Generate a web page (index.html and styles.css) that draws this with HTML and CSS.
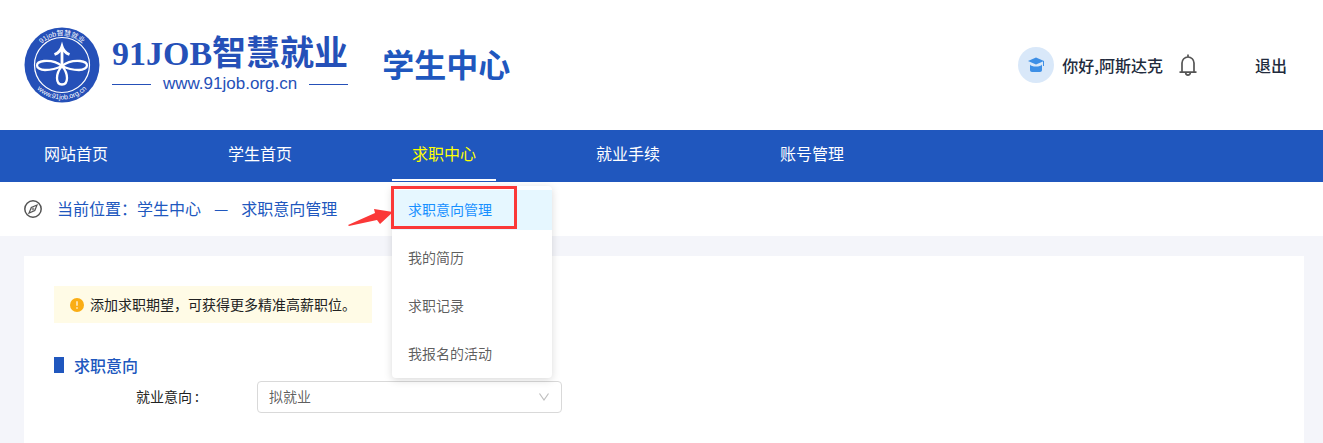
FILE: index.html
```html
<!DOCTYPE html>
<html lang="zh-CN">
<head>
  <meta charset="UTF-8" />
  <meta name="viewport" content="width=device-width, initial-scale=1" />
  <title>学生中心</title>
  <link rel="stylesheet" href="styles.css">
</head>
<body>
  <header class="header">
    <a class="logo" href="#">
      <svg class="logo-mark" viewBox="0 0 76 76" width="76" height="76">
        <defs>
          <path id="arcTop" d="M8.500 38a29.500 29.500 0 0 1 59 0" />
          <path id="arcBottom" d="M3.500 38a34.500 34.500 0 0 0 69 0" />
        </defs>
        <circle cx="38" cy="38" r="37.500" fill="#2550b8" />
        <circle cx="38" cy="38" r="27.500" fill="none" stroke="#fff" stroke-width="1.200" />
        <g fill="none" stroke="#fff" stroke-width="2.300">
          <path d="M38 39C33 35 26 33.500 20 34c-5 .5-7 2.500-7 4.500s3 4.500 8 4.500c6 0 12-1.500 17-4z" />
          <path d="M38 39c5-4 12-5.500 18-5 5 .5 7 2.500 7 4.500S60 43 55 43c-6 0-12-1.500-17-4z" />
          <path d="M38 39c-3 3.500-5 8-5 12 0 4 2 6.500 5 6.500s5-2.500 5-6.500c0-4-2-8.500-5-12z" />
          <path d="M38 39V21" stroke-width="2.800" />
          <path d="M30.500 27.500c4-1.500 6.500-4.500 7.500-8 1 3.500 3.500 6.500 7.500 8" stroke-width="2.800" />
        </g>
        <text class="logo-arc"><textPath href="#arcTop" startOffset="50%" text-anchor="middle">91job智慧就业</textPath></text>
        <text class="logo-arc"><textPath href="#arcBottom" startOffset="50%" text-anchor="middle">www.91job.org.cn</textPath></text>
      </svg>
      <span class="logo-text">
        <span class="logo-name">91JOB智慧就业</span>
        <span class="logo-url">www.91job.org.cn</span>
      </span>
    </a>
    <h1 class="site-title">学生中心</h1>
    <div class="user">
      <span class="avatar">
        <svg viewBox="0 0 18 18" width="18" height="18" fill="#3d8fe6">
          <path d="M9 1.500 1 5 9 8.400 17 5z" />
          <path d="M16 5h1v5h-1z" />
          <path d="M3 8.500c1 2.800 11 2.800 12 0V14c0 1.200-.8 2-2 2H5c-1.200 0-2-.8-2-2z" />
        </svg>
      </span>
      <span class="user-name">你好,阿斯达克</span>
      <button class="bell" type="button" aria-label="消息">
        <svg viewBox="0 0 18 22" width="18" height="22" fill="none" stroke="#555" stroke-width="1.700">
          <path d="M3 18V9a6 6 0 0 1 12 0v9M.5 18.200h17M9 .5V3M6.700 18.800a2.300 2.300 0 0 0 4.600 0" />
        </svg>
      </button>
      <a class="logout" href="#">退出</a>
    </div>
  </header>

  <nav class="nav">
    <a class="nav-link" href="#">网站首页</a>
    <a class="nav-link" href="#">学生首页</a>
    <div class="nav-item">
      <a class="nav-link active" href="#">求职中心</a>
      <div class="menu">
        <a class="menu-link selected" href="#">求职意向管理</a>
        <a class="menu-link" href="#">我的简历</a>
        <a class="menu-link" href="#">求职记录</a>
        <a class="menu-link" href="#">我报名的活动</a>
        <span class="marker"></span>
        <svg class="marker-arrow" viewBox="0 0 45 20" width="45" height="20" fill="#fb3838">
          <path d="M0 18 27 6 26 2 45 5 32 17 29 13 1 19z" />
        </svg>
      </div>
    </div>
    <a class="nav-link" href="#">就业手续</a>
    <a class="nav-link" href="#">账号管理</a>
  </nav>

  <div class="breadcrumb">
    <svg viewBox="0 0 18 18" width="18" height="18" fill="none" stroke="#555">
      <circle cx="9" cy="9" r="8.200" stroke-width="1.500" />
      <path d="M13 5 10.800 10.500 5 13 7.300 7.400z" stroke-width="1.200" />
      <circle cx="9" cy="9" r="1" stroke-width=".8" />
    </svg>
    <span class="crumbs">
      <span>当前位置：<a href="#">学生中心</a></span>
      <span>—</span>
      <a href="#">求职意向管理</a>
    </span>
  </div>

  <main class="card">
    <div class="notice">
      <svg viewBox="0 0 14 14" width="14" height="14">
        <circle cx="7" cy="7" r="7" fill="#faad14" />
        <path d="M7 3.200v4.600M7 9.300v1.400" stroke="#fff" stroke-width="1.200" />
      </svg>
      <span>添加求职期望，可获得更多精准高薪职位。</span>
    </div>
    <h2 class="section-title">求职意向</h2>
    <form class="form-row">
      <label for="intention">就业意向 :</label>
      <div class="select-box">
        <select id="intention">
          <option>拟就业</option>
        </select>
        <svg viewBox="0 0 12 12" width="12" height="12" fill="none" stroke="#bfbfbf" stroke-width="1.200">
          <path d="M1.500 2.500 6 9l4.500-6.500" />
        </svg>
      </div>
    </form>
  </main>
</body>
</html>
```

FILE: styles.css
```css
:root {
  --primary: #2057be;
  --logo: #2550b8;
  --text: #222;
  --red: #fb3838;
}

*, *::before, *::after { box-sizing: border-box; }

body {
  margin: 0;
  min-height: 100vh;
  display: flex;
  flex-direction: column;
  background: #f4f5fa;
  color: var(--text);
  font-family: "Noto Sans CJK SC", sans-serif;
  font-size: 14px;
  line-height: 22px;
}

a {
  color: inherit;
  text-decoration: none;
}

svg { display: block; flex: none; }

/* Header */
.header {
  display: flex;
  align-items: center;
  height: 130px;
  padding: 0 36px 0 24px;
  background: #fff;
}

.logo {
  display: flex;
  align-items: center;
  gap: 12px;
  color: var(--logo);
}

.logo-arc {
  font-family: "Liberation Sans", "Noto Sans CJK SC", sans-serif;
  font-size: 7px;
  fill: #fff;
}

.logo-text {
  display: flex;
  flex-direction: column;
}

.logo-name {
  font-family: "Liberation Serif", "Noto Sans CJK SC", serif;
  font-size: 34px;
  font-weight: 700;
  line-height: 38px;
}

.logo-url {
  display: flex;
  align-items: center;
  gap: 12px;
  font-family: "Liberation Sans", sans-serif;
  font-size: 17px;
  line-height: 22px;
}

.logo-url::before,
.logo-url::after {
  content: "";
  flex: 1;
  height: 1px;
  background: var(--logo);
}

.site-title {
  margin: 0 0 0 34px;
  padding-bottom: 4px;
  color: var(--primary);
  font-size: 32px;
  font-weight: 700;
  line-height: 40px;
}

.user {
  display: flex;
  align-items: center;
  margin-left: auto;
  color: #222b3d;
  font-size: 16px;
  font-weight: 500;
}

.avatar {
  display: flex;
  align-items: center;
  justify-content: center;
  width: 36px;
  height: 36px;
  margin-right: 8px;
  border-radius: 50%;
  background: #d9e8f9;
}

.bell {
  margin: 0 58px 0 16px;
  padding: 0;
  border: none;
  background: none;
  cursor: pointer;
}

/* Navigation */
.nav {
  display: flex;
  gap: 80px;
  height: 52px;
  padding: 0 24px;
  background: var(--primary);
}

.nav-item { position: relative; }

.nav-link {
  display: block;
  height: 51px;
  padding: 0 20px;
  border-bottom: 2px solid transparent;
  color: #fff;
  font-size: 16px;
  line-height: 46px;
}

.nav-link.active {
  border-color: #fff;
  color: #ff0;
}

.menu {
  position: absolute;
  top: 56px;
  left: 0;
  z-index: 10;
  display: flex;
  flex-direction: column;
  gap: 8px;
  width: 160px;
  padding: 4px 0;
  border-radius: 4px;
  background: #fff;
  box-shadow: 0 2px 8px rgba(0, 0, 0, 0.15);
}

.menu-link {
  height: 40px;
  padding: 0 16px;
  color: rgba(0, 0, 0, 0.65);
  line-height: 38px;
}

.menu-link.selected {
  background: #e6f7ff;
  color: #1890ff;
}

/* Red frame and arrow over the current menu entry */
.marker {
  position: absolute;
  top: 0;
  left: -1px;
  width: 126px;
  height: 43px;
  border: 3px solid var(--red);
}

.marker-arrow {
  position: absolute;
  top: 21px;
  left: -44px;
}

/* Breadcrumb */
.breadcrumb {
  display: flex;
  align-items: center;
  gap: 15px;
  height: 54px;
  padding: 0 24px;
  background: #fff;
  color: var(--primary);
  font-size: 16px;
}

.crumbs {
  display: flex;
  gap: 13px;
  padding-bottom: 2px;
}

/* Content */
.card {
  flex: 1;
  margin: 20px 19px 0 24px;
  padding: 30px;
  background: #fff;
}

.notice {
  display: flex;
  align-items: center;
  gap: 6px;
  width: fit-content;
  height: 37px;
  padding: 0 16px;
  background: #fffbe6;
}

.notice span { padding-bottom: 2px; }

.section-title {
  display: flex;
  align-items: center;
  gap: 10px;
  margin: 30px 0 4px;
  color: var(--primary);
  font-size: 16px;
  font-weight: 500;
  line-height: 24px;
}

.section-title::before {
  content: "";
  width: 10px;
  height: 16px;
  background: var(--primary);
}

.form-row {
  display: grid;
  grid-template-columns: 145px 305px;
  align-items: center;
  gap: 58px;
}

.form-row label {
  padding-bottom: 2px;
  text-align: right;
}

.select-box {
  display: grid;
  align-items: center;
}

.select-box select,
.select-box svg {
  grid-area: 1 / 1;
}

.select-box svg {
  justify-self: end;
  margin-right: 12px;
  pointer-events: none;
}

.select-box select {
  width: 100%;
  height: 32px;
  padding: 0 11px 2px;
  border: 1px solid #d9d9d9;
  border-radius: 4px;
  appearance: none;
  background: #fff;
  color: rgba(0, 0, 0, 0.65);
  font: inherit;
}
```
